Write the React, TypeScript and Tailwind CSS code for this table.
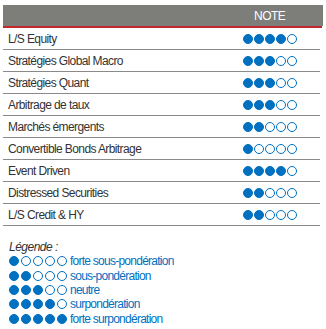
const rows: [string, number][] = [
  ['L/S Equity', 4],
  ['Stratégies Global Macro', 3],
  ['Stratégies Quant', 3],
  ['Arbitrage de taux', 3],
  ['Marchés émergents', 2],
  ['Convertible Bonds Arbitrage', 1],
  ['Event Driven', 4],
  ['Distressed Securities', 2],
  ['L/S Credit & HY', 2],
]

const legend: [number, string][] = [
  [1, 'forte sous-pondération'],
  [2, 'sous-pondération'],
  [3, 'neutre'],
  [4, 'surpondération'],
  [5, 'forte surpondération'],
]

function Dots({ n, wide }: { n: number; wide?: boolean }) {
  return (
    <div className={`flex ${wide ? 'gap-[2px]' : 'gap-[1px]'}`}>
      {[0, 1, 2, 3, 4].map(i => (
        <span
          key={i}
          className={`block w-[10px] h-[10px] rounded-full border border-[#0070c0] ${i < n ? 'bg-[#0070c0]' : 'bg-white'}`}
        />
      ))}
    </div>
  )
}

export default function App() {
  return (
    <div className="w-[326px] h-[329px] bg-white pt-[5px] px-[3px] font-['Liberation_Sans',Arial,sans-serif]">
      {/* header */}
      <div className="h-[21px] bg-[#7d7d79] flex items-center">
        <span className="ml-[251px] text-white text-[12px] tracking-[-0.5px]">NOTE</span>
      </div>
      <div className="h-[2px] w-[319px] bg-[#c0282d]" />

      {/* table */}
      <div className="w-[317px]">
        {rows.map(([label, n]) => (
          <div key={label} className="h-[22px] flex items-center border-b border-[#8a8a8a]">
            <span className="pl-[5px] flex-1 text-[#333] text-[12px] tracking-[-0.6px]">{label}</span>
            <div className="mr-[23px]">
              <Dots n={n} />
            </div>
          </div>
        ))}
      </div>

      {/* legend */}
      <div className="mt-[14px] pl-[6px]">
        <div className="italic text-[#333] text-[12px] tracking-[-0.5px] leading-[14px]">Légende :</div>
        {legend.map(([n, text]) => (
          <div key={text} className="flex items-center h-[14.4px] gap-[3px]">
            <Dots n={n} wide />
            <span className="text-[#0070c0] text-[12px] tracking-[-0.75px]">{text}</span>
          </div>
        ))}
      </div>
    </div>
  )
}
